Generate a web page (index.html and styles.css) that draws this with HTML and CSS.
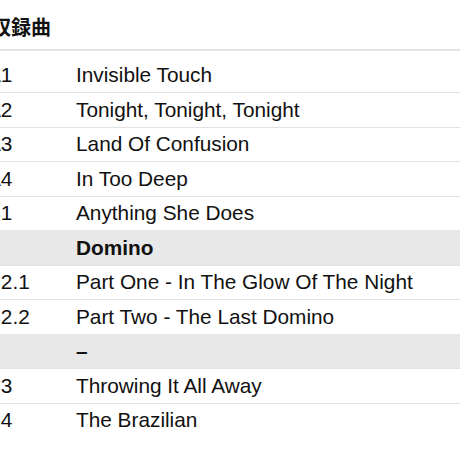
FILE: index.html
```html
<!DOCTYPE html>
<html lang="ja">

<head>
  <meta charset="UTF-8">
  <meta name="viewport" content="width=device-width, initial-scale=1.0">
  <title>収録曲</title>
  <link rel="stylesheet" href="styles.css">
</head>

<body>
  <div class="page">
    <h2 class="heading">収録曲</h2>

    <div class="tracklist">
      <div class="track">
        <span class="pos">A1</span>
        <span class="title">Invisible Touch</span>
      </div>
      <div class="track">
        <span class="pos">A2</span>
        <span class="title">Tonight, Tonight, Tonight</span>
      </div>
      <div class="track">
        <span class="pos">A3</span>
        <span class="title">Land Of Confusion</span>
      </div>
      <div class="track">
        <span class="pos">A4</span>
        <span class="title">In Too Deep</span>
      </div>
      <div class="track">
        <span class="pos">B1</span>
        <span class="title">Anything She Does</span>
      </div>
      <div class="track index">
        <span class="pos"></span>
        <span class="title">Domino</span>
      </div>
      <div class="track">
        <span class="pos">B2.1</span>
        <span class="title">Part One - In The Glow Of The Night</span>
      </div>
      <div class="track">
        <span class="pos">B2.2</span>
        <span class="title">Part Two - The Last Domino</span>
      </div>
      <div class="track index">
        <span class="pos"></span>
        <span class="title">–</span>
      </div>
      <div class="track">
        <span class="pos">B3</span>
        <span class="title">Throwing It All Away</span>
      </div>
      <div class="track">
        <span class="pos">B4</span>
        <span class="title">The Brazilian</span>
      </div>
    </div>
  </div>
</body>

</html>
```

FILE: styles.css
```css
body {
  margin: 0;
  font-family: "Liberation Sans", Arial, sans-serif;
  color: #111;
  background-color: #fff;
  overflow: hidden;
}

.page {
  margin-left: -13px;
  width: 520px;
}

.heading {
  margin: 0;
  padding: 13px 0 9px 4px;
  font-family: "Noto Sans CJK JP", sans-serif;
  font-size: 20px;
  line-height: 27px;
  font-weight: bold;
  border-bottom: 2px solid #e4e4e4;
}

.tracklist {
  margin-top: 6.5px;
}

.track {
  display: flex;
  align-items: center;
  height: 34.5px;
  box-sizing: border-box;
  font-size: 20.8px;
  border-top: 1px solid #e2e2e2;
}

.track:first-child {
  border-top: none;
}

.track.index {
  background-color: #e8e8e8;
  border-top-color: #e8e8e8;
  font-weight: bold;
}

.pos {
  width: 89px;
  flex-shrink: 0;
}

.title {
  white-space: nowrap;
}
```
